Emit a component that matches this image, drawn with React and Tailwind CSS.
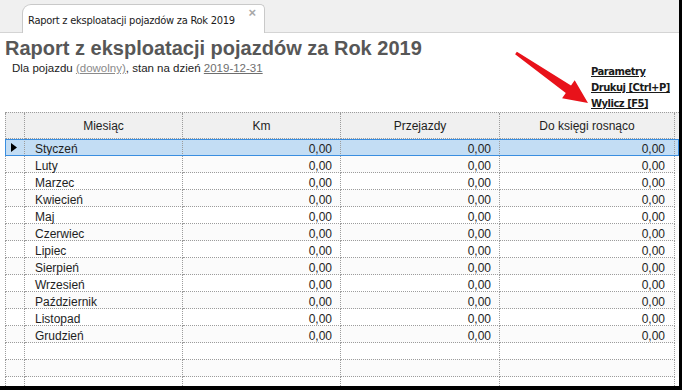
import React from "react";

const months = [
  "Styczeń", "Luty", "Marzec", "Kwiecień", "Maj", "Czerwiec",
  "Lipiec", "Sierpień", "Wrzesień", "Październik", "Listopad", "Grudzień",
];

const cellB = "border-r border-b border-dotted border-[#9c9c9c]";

function Row({ name, selected, idx }) {
  const bg = selected ? "bg-[#c3ddf4]" : idx % 2 === 1 ? "bg-[#fbfbfb]" : "bg-white";
  return (
    <div
      className={`flex h-[17px] ${bg} ${selected ? "outline outline-1 -outline-offset-1 outline-[#3a8ee0]" : ""}`}
    >
      <div className={`w-[20px] ${cellB} border-l flex items-center justify-center`}>
        {selected && (
          <svg width="6" height="9" viewBox="0 0 6 9" className="ml-[-2px]">
            <polygon points="0,0 6,4.5 0,9" fill="#000" />
          </svg>
        )}
      </div>
      <div className={`w-[158px] ${cellB} flex items-center pt-[3px] pl-[10px]`}>{name}</div>
      <div className={`w-[158px] ${cellB} flex items-center pt-[3px] justify-end pr-[8px]`}>{name ? "0,00" : ""}</div>
      <div className={`w-[159px] ${cellB} flex items-center pt-[3px] justify-end pr-[8px]`}>{name ? "0,00" : ""}</div>
      <div className={`w-[175px] ${cellB} flex items-center pt-[3px] justify-end pr-[9px]`}>{name ? "0,00" : ""}</div>
    </div>
  );
}

export default function App() {
  return (
    <div className="w-[682px] h-[390px] bg-black relative overflow-hidden font-['Liberation_Sans',Arial,sans-serif]">
      <div className="w-[679px] h-[386px] bg-white flex flex-col overflow-hidden">
        {/* tab bar */}
        <div className="h-[33px] flex items-end bg-[#f0f0f0] shrink-0">
          <div className="w-[22px] h-full border-b border-[#d4d4d4]" />
          <div className="w-[243px] h-[29px] bg-white border-l border-t border-r border-[#c9c9c9] rounded-tl-[9px] rounded-tr-[5px] flex items-start justify-between pl-[5px] pr-[8px]">
            <span className="text-[11px] tracking-[-0.25px] text-[#1a1a1a] mt-[8px] font-['DejaVu_Sans_Condensed','Liberation_Sans',sans-serif]">
              Raport z eksploatacji pojazdów za Rok 2019
            </span>
            <span className="text-[13px] leading-none text-[#a8a8a8] font-bold mt-[1px]">×</span>
          </div>
          <div className="flex-1 h-full border-b border-[#d4d4d4]" />
        </div>

        {/* header section */}
        <div className="flex justify-between h-[79px] shrink-0">
          <div className="flex flex-col pl-[5px]">
            <div className="mt-[3px] text-[20px] leading-[24px] font-bold text-[#575757]">
              Raport z eksploatacji pojazdów za Rok 2019
            </div>
            <div className="pl-[7px] mt-[2px] text-[11.5px] leading-[13px] text-[#222]">
              Dla pojazdu <span className="underline text-[#8a8a8a]">(dowolny)</span>, stan na dzień{" "}
              <span className="underline text-[#6e6e6e]">2019-12-31</span>
            </div>
          </div>
          <div className="self-end flex flex-col w-[88px] text-[10px] leading-[16px] font-bold text-[#1a1a1a] font-['DejaVu_Sans','Liberation_Sans',sans-serif] tracking-[-0.5px]">
            <span className="underline">Parametry</span>
            <span className="underline">Drukuj [Ctrl+P]</span>
            <span className="underline">Wylicz [F5]</span>
          </div>
        </div>

        {/* table */}
        <div className="pl-[5px] text-[12px] text-[#1e1e1e]">
          <div className="flex h-[27px] bg-[#f0f0f0] border-t border-dotted border-[#9c9c9c]">
            <div className={`w-[20px] ${cellB} border-l`} />
            <div className={`w-[158px] ${cellB} flex items-center justify-center`}>Miesiąc</div>
            <div className={`w-[158px] ${cellB} flex items-center justify-center`}>Km</div>
            <div className={`w-[159px] ${cellB} flex items-center justify-center`}>Przejazdy</div>
            <div className={`w-[175px] ${cellB} flex items-center justify-center`}>Do księgi rosnąco</div>
          </div>
          {months.map((m, i) => (
            <Row key={m} name={m} idx={i} selected={i === 0} />
          ))}
          <Row name="" idx={12} />
          <Row name="" idx={13} />
          <Row name="" idx={14} />
        </div>
      </div>

      {/* red arrow annotation */}
      <svg className="absolute left-0 top-0 pointer-events-none" width="682" height="390">
        <polygon
          points="516.9,51.8 571,85.5 574.7,80.2 588,103 562.1,98.2 565.8,92.9 515.1,54.2"
          fill="#e8121a"
        />
      </svg>
    </div>
  );
}
